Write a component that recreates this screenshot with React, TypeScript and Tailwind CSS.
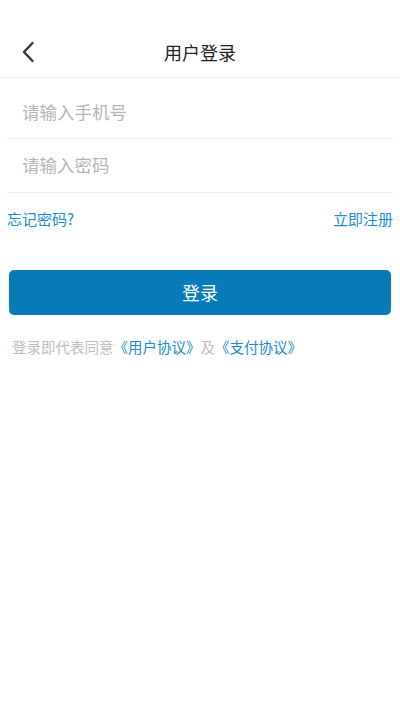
import { useState } from "react";

const FONT = `"Noto Sans CJK SC", "Noto Sans", sans-serif`;

export default function App() {
  const [phone, setPhone] = useState("");
  const [password, setPassword] = useState("");

  return (
    <div className="min-h-[710px] w-full bg-white text-[#333]" style={{ fontFamily: FONT }}>
      {/* Header */}
      <div className="flex h-[78px] items-end border-b border-[#ececec] pb-[9px]">
        <div className="relative flex h-[32px] w-full items-center justify-center">
          <button className="absolute left-[16px] top-1/2 flex h-8 w-6 -translate-y-1/2 items-center justify-center">
            <svg width="14" height="22" viewBox="0 0 14 22" fill="none">
              <path d="M11.5 2 L3 11 L11.5 20" stroke="#333" strokeWidth="2.4" strokeLinecap="round" strokeLinejoin="round" />
            </svg>
          </button>
          <h1 className="text-[18px] text-[#222]">用户登录</h1>
        </div>
      </div>

      {/* Inputs */}
      <div className="px-[7px]">
        <div className="flex h-[61px] items-center border-b border-[#ececec] pt-[8px]">
          <input
            value={phone}
            onChange={(e) => setPhone(e.target.value)}
            placeholder="请输入手机号"
            className="w-full bg-transparent pl-[15px] text-[17.5px] text-[#333] outline-none placeholder:text-[#b5b5b5]"
          />
        </div>
        <div className="flex h-[54px] items-center border-b border-[#ececec]">
          <input
            type="password"
            value={password}
            onChange={(e) => setPassword(e.target.value)}
            placeholder="请输入密码"
            className="w-full bg-transparent pl-[15px] text-[17.5px] text-[#333] outline-none placeholder:text-[#b5b5b5]"
          />
        </div>
      </div>

      {/* Links */}
      <div className="flex items-center justify-between px-[7px] pt-[15px] text-[15px] text-[#1b8bd0]">
        <span>忘记密码?</span>
        <span>立即注册</span>
      </div>

      {/* Login button */}
      <div className="px-[9px] pt-[39px]">
        <button className="flex h-[45px] w-full items-center justify-center rounded-[5px] bg-[#087bbb] text-[18px] text-white">
          登录
        </button>
      </div>

      {/* Agreement */}
      <p className="px-[12px] pt-[21px] text-[14.5px] text-[#bdbdbd]">
        登录即代表同意
        <span className="text-[#1b8bd0]">《用户协议》</span>及
        <span className="text-[#1b8bd0]">《支付协议》</span>
      </p>
    </div>
  );
}
